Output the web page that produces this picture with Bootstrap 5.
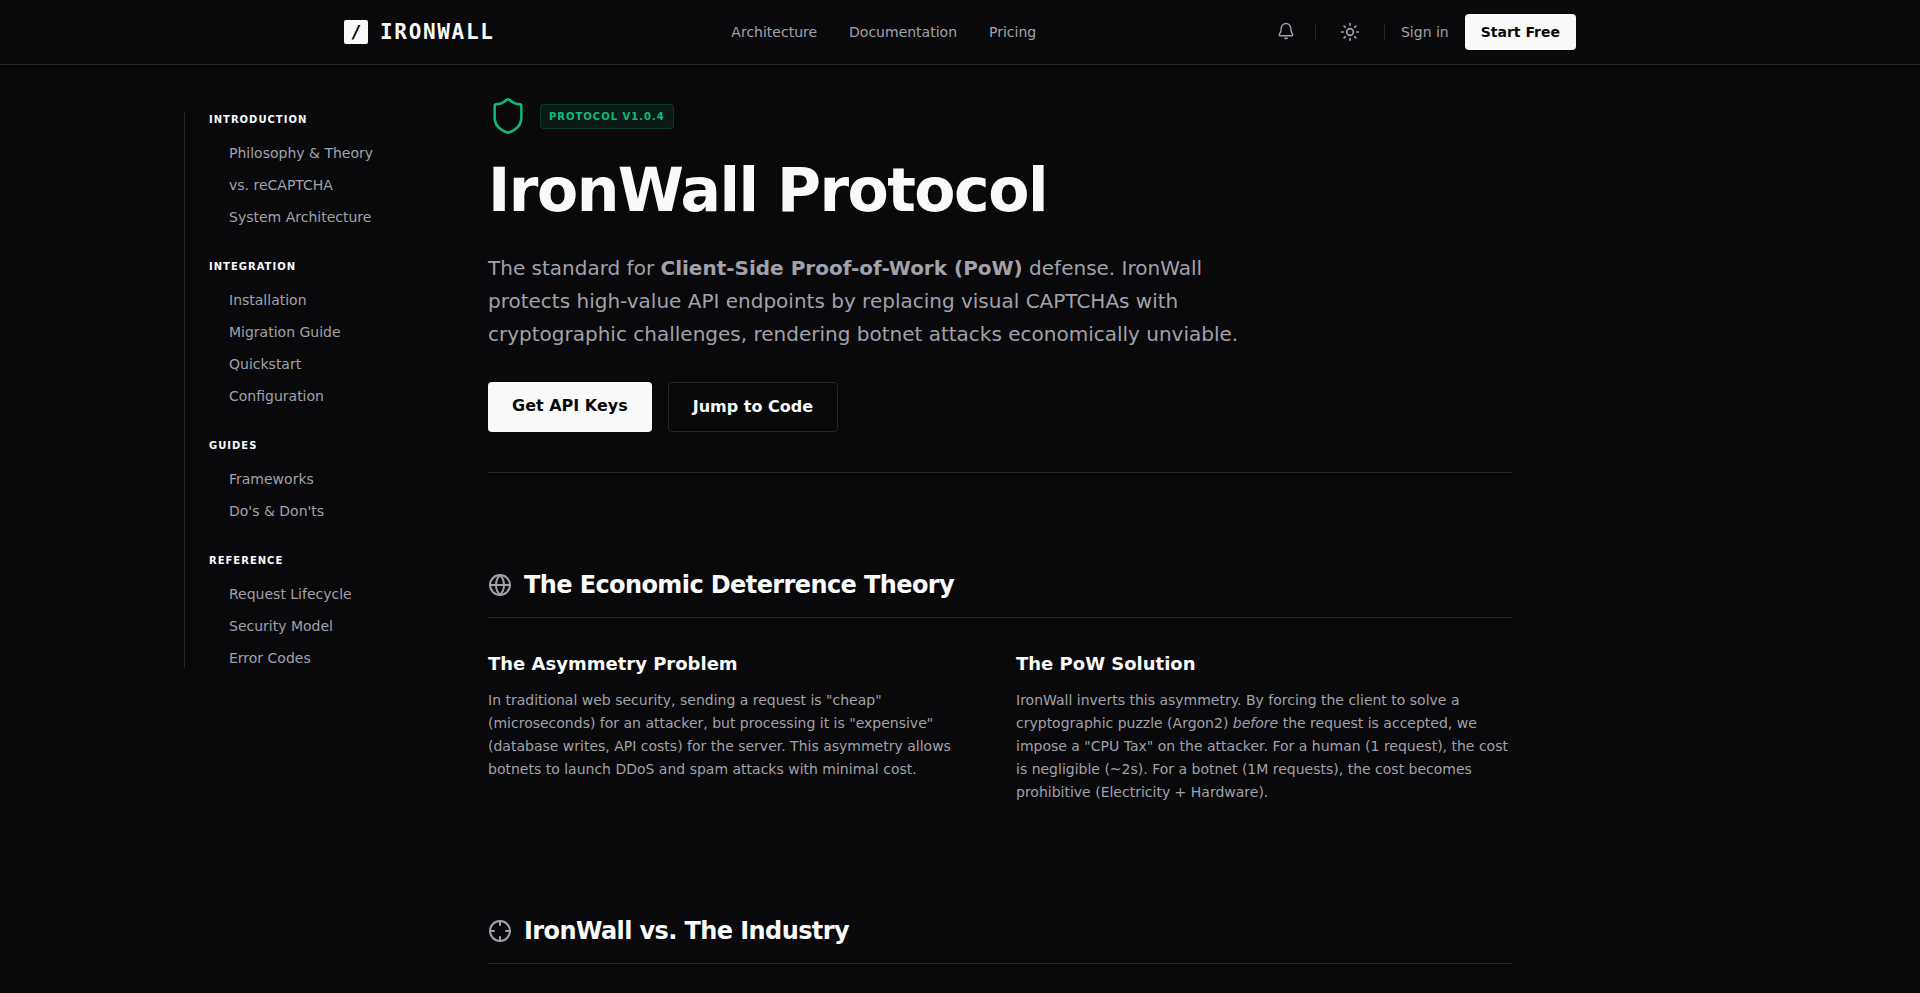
<!DOCTYPE html>
<html lang="en" data-bs-theme="dark">
<head>
<meta charset="utf-8">
<meta name="viewport" content="width=device-width, initial-scale=1">
<title>IronWall Protocol</title>
<link href="https://cdn.jsdelivr.net/npm/bootstrap@5.3.0/dist/css/bootstrap.min.css" rel="stylesheet">
<style>
  :root {
    --iw-bg: #09090b;
    --iw-text: #fafafa;
    --iw-muted: #a1a1aa;
    --iw-line: #27272a;
    --iw-accent: #10b981;
  }
  body { background: var(--iw-bg); color: var(--iw-muted); font-family: "DejaVu Sans", sans-serif; font-size: 14px; line-height: 20px; overflow-x: hidden; }
  a { color: inherit; text-decoration: none; }
  a:hover { color: var(--iw-text); }
  svg { fill: none; stroke: currentColor; stroke-linecap: round; stroke-linejoin: round; display: block; flex-shrink: 0; }

  .iw-header { background: var(--iw-bg); border-bottom: 1px solid var(--iw-line); }
  .iw-bar { max-width: 1280px; height: 64px; }
  .iw-brand { color: var(--iw-text); font-family: "DejaVu Sans Mono", monospace; font-size: 21px; font-weight: 700; line-height: 32px; letter-spacing: 0.08em; }
  .iw-logo { width: 24px; height: 24px; border-radius: 2px; background: var(--iw-text); color: #000; font-size: 18px; line-height: 24px; letter-spacing: 0; }
  .iw-rule { width: 1px; height: 16px; background: var(--iw-line); }
  .iw-icon-btn { background: none; border: 0; color: inherit; padding: 8px; }
  .iw-icon-btn.iw-bell { padding: 8px 3px; }

  .iw-btn { --bs-btn-font-weight: 700; --bs-btn-border-radius: 4px; --bs-btn-border-width: 0; --bs-btn-font-size: 16px; --bs-btn-line-height: 24px; --bs-btn-padding-x: 24px; --bs-btn-padding-y: 12px; }
  .iw-btn-sm { --bs-btn-font-size: 14px; --bs-btn-line-height: 20px; --bs-btn-padding-x: 16px; --bs-btn-padding-y: 8px; }
  .iw-btn-light { --bs-btn-bg: #fafafa; --bs-btn-color: #09090b; --bs-btn-hover-bg: #e4e4e7; --bs-btn-hover-color: #09090b; }
  .iw-btn-line { --bs-btn-border-width: 1px; --bs-btn-border-color: #27272a; --bs-btn-color: #fafafa; --bs-btn-hover-bg: #18181b; --bs-btn-hover-color: #fafafa; --bs-btn-hover-border-color: #27272a; }

  .iw-page { max-width: 1600px; gap: 48px; }
  .iw-side { width: 256px; flex-shrink: 0; padding-top: 47px; }
  .iw-toc { border-left: 1px solid var(--iw-line); padding-left: 24px; gap: 32px; }
  .iw-toc h2 { font-size: 10px; line-height: 15px; font-weight: 700; letter-spacing: 1px; color: var(--iw-text); margin-bottom: 16px; }
  .iw-toc ul { gap: 12px; padding-left: 20px; }

  .iw-main { max-width: 1024px; padding-top: 31px; }
  .iw-shield { color: var(--iw-accent); }
  .iw-tag { font-size: 10px; line-height: 15px; font-weight: 700; letter-spacing: 1px; color: var(--iw-accent); border: 1px solid rgba(16, 185, 129, .2); background: rgba(16, 185, 129, .1); border-radius: 4px; padding: 4px 8px; }
  .iw-hero { border-bottom: 1px solid var(--iw-line); padding-bottom: 40px; margin-bottom: 96px; }
  .iw-hero h1 { font-size: 60px; line-height: 60px; font-weight: 800; letter-spacing: -0.025em; color: var(--iw-text); margin: 24px 0 32px; }
  .iw-intro { font-size: 20px; line-height: 33px; max-width: 768px; margin-bottom: 31px; }
  .iw-section { margin-bottom: 111px; }
  .iw-section h2 { font-size: 24px; line-height: 32px; font-weight: 700; letter-spacing: -0.025em; color: var(--iw-text); margin: 0; }
  .iw-section-head { border-bottom: 1px solid var(--iw-line); padding-bottom: 16px; margin-bottom: 32px; gap: 12px; }
  .iw-cols { --bs-gutter-x: 32px; --bs-gutter-y: 32px; }
  .iw-cols h3 { font-size: 18px; line-height: 28px; font-weight: 700; color: var(--iw-text); margin-bottom: 11px; }
  .iw-cols p { line-height: 23px; margin: 0; }
</style>
</head>
<body>
<header class="iw-header sticky-top">
  <div class="iw-bar container-fluid px-4 d-flex align-items-center justify-content-between">
    <a class="iw-brand d-flex align-items-center text-uppercase" href="#top">
      <span class="iw-logo d-flex align-items-center justify-content-center me-2">/</span>
      <span class="ms-1">IronWall</span>
    </a>
    <nav class="d-none d-md-flex" aria-label="Main">
      <a class="me-3 pe-3" href="#architecture">Architecture</a>
      <a class="me-3 pe-3" href="#documentation">Documentation</a>
      <a href="#pricing">Pricing</a>
    </nav>
    <div class="d-flex align-items-center gap-3">
      <button class="iw-icon-btn iw-bell" type="button" aria-label="Notifications">
        <svg width="20" height="20" viewBox="0 0 20 20" stroke-width="1.400"><path d="M10 1.500a4.700 4.700 0 0 0-4.700 4.600c0 3.400-.8 4.700-1.900 6.300-.4.600-.1 1.300.6 1.300h12c.7 0 1-.7.6-1.300-1.100-1.600-1.900-2.900-1.900-6.300A4.700 4.700 0 0 0 10 1.500z"/><path d="M8.700 16.100q1.300.9 2.600 0z" fill="currentColor"/></svg>
      </button>
      <span class="iw-rule"></span>
      <button class="iw-icon-btn" type="button" aria-label="Toggle theme">
        <svg width="20" height="20" viewBox="0 0 24 24" stroke-width="2"><circle cx="12" cy="12" r="4"/><path d="M12 2v2M12 20v2M4.930 4.930l1.410 1.410M17.660 17.660l1.410 1.410M2 12h2M20 12h2M6.340 17.660l-1.410 1.410M19.070 4.930l-1.410 1.410"/></svg>
      </button>
      <span class="iw-rule"></span>
      <a href="#signin">Sign in</a>
      <button class="btn iw-btn iw-btn-sm iw-btn-light" type="button">Start Free</button>
    </div>
  </div>
</header>

<div class="iw-page container-fluid px-4 d-flex" id="top">
  <aside class="iw-side d-none d-lg-block">
    <nav class="iw-toc d-flex flex-column" aria-label="Contents">
      <section>
        <h2>INTRODUCTION</h2>
        <ul class="list-unstyled d-flex flex-column mb-0">
          <li><a href="#theory">Philosophy &amp; Theory</a></li>
          <li><a href="#industry">vs. reCAPTCHA</a></li>
          <li><a href="#system">System Architecture</a></li>
        </ul>
      </section>
      <section>
        <h2>INTEGRATION</h2>
        <ul class="list-unstyled d-flex flex-column mb-0">
          <li><a href="#installation">Installation</a></li>
          <li><a href="#migration">Migration Guide</a></li>
          <li><a href="#quickstart">Quickstart</a></li>
          <li><a href="#configuration">Configuration</a></li>
        </ul>
      </section>
      <section>
        <h2>GUIDES</h2>
        <ul class="list-unstyled d-flex flex-column mb-0">
          <li><a href="#frameworks">Frameworks</a></li>
          <li><a href="#dos">Do's &amp; Don'ts</a></li>
        </ul>
      </section>
      <section>
        <h2>REFERENCE</h2>
        <ul class="list-unstyled d-flex flex-column mb-0">
          <li><a href="#lifecycle">Request Lifecycle</a></li>
          <li><a href="#security">Security Model</a></li>
          <li><a href="#errors">Error Codes</a></li>
        </ul>
      </section>
    </nav>
  </aside>

  <main class="iw-main flex-grow-1">
    <div class="iw-hero">
      <div class="d-flex align-items-center">
        <svg class="iw-shield me-2" width="40" height="40" viewBox="0 0 24 24" stroke-width="1.500"><path d="M20 13c0 5-3.500 7.500-7.660 8.950a1 1 0 0 1-.67-.01C7.500 20.500 4 18 4 13V6a1 1 0 0 1 1-1c2 0 4.500-1.200 6.240-2.720a1.170 1.170 0 0 1 1.520 0C14.510 3.810 17 5 19 5a1 1 0 0 1 1 1z"/></svg>
        <span class="iw-tag ms-1">PROTOCOL V1.0.4</span>
      </div>
      <h1>IronWall Protocol</h1>
      <p class="iw-intro">The standard for <strong>Client-Side Proof-of-Work (PoW)</strong> defense. IronWall protects high-value API endpoints by replacing visual CAPTCHAs with cryptographic challenges, rendering botnet attacks economically unviable.</p>
      <div class="d-flex flex-wrap gap-3">
        <a class="btn iw-btn iw-btn-light" href="#keys">Get API Keys</a>
        <a class="btn iw-btn iw-btn-line" href="#quickstart">Jump to Code</a>
      </div>
    </div>

    <section class="iw-section" id="theory">
      <div class="iw-section-head d-flex align-items-center">
        <svg width="24" height="24" viewBox="0 0 24 24" stroke-width="2"><circle cx="12" cy="12" r="10"/><path d="M12 2a14.500 14.500 0 0 0 0 20 14.500 14.500 0 0 0 0-20M2 12h20"/></svg>
        <h2>The Economic Deterrence Theory</h2>
      </div>
      <div class="row iw-cols">
        <div class="col-12 col-md-6">
          <h3>The Asymmetry Problem</h3>
          <p>In traditional web security, sending a request is "cheap" (microseconds) for an attacker, but processing it is "expensive" (database writes, API costs) for the server. This asymmetry allows botnets to launch DDoS and spam attacks with minimal cost.</p>
        </div>
        <div class="col-12 col-md-6">
          <h3>The PoW Solution</h3>
          <p>IronWall inverts this asymmetry. By forcing the client to solve a cryptographic puzzle (Argon2) <em>before</em> the request is accepted, we impose a "CPU Tax" on the attacker. For a human (1 request), the cost is negligible (~2s). For a botnet (1M requests), the cost becomes prohibitive (Electricity + Hardware).</p>
        </div>
      </div>
    </section>

    <section class="iw-section" id="industry">
      <div class="iw-section-head d-flex align-items-center">
        <svg width="24" height="24" viewBox="0 0 24 24" stroke-width="2"><circle cx="12" cy="12" r="10"/><path d="M22 12h-4M6 12H2M12 6V2M12 22v-4"/></svg>
        <h2>IronWall vs. The Industry</h2>
      </div>
    </section>
  </main>
</div>
<script src="https://cdn.jsdelivr.net/npm/bootstrap@5.3.0/dist/js/bootstrap.bundle.min.js"></script>
</body>
</html>
